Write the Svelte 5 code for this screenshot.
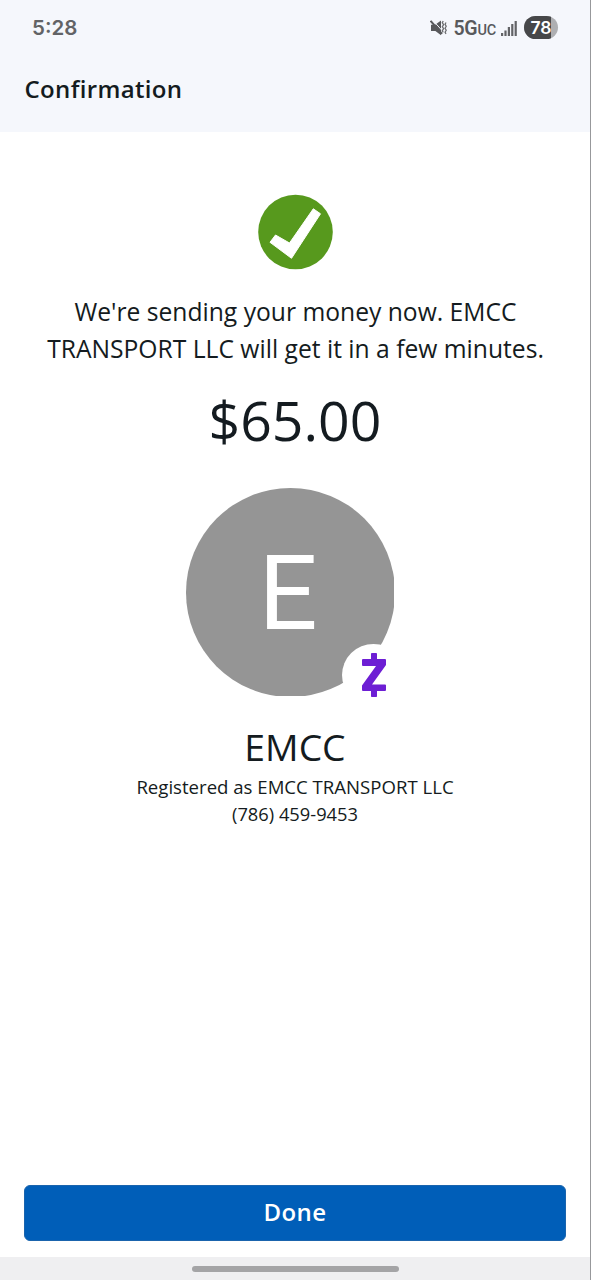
<script lang="ts">
	type Payment = {
		name: string;
		registeredName: string;
		phone: string;
		amount: number;
	};

	const payment: Payment = {
		name: 'EMCC',
		registeredName: 'EMCC TRANSPORT LLC',
		phone: '(786) 459-9453',
		amount: 65
	};

	const time = '5:28';
	const battery = 78;

	$: initial = payment.name.charAt(0);
	$: amountText = '$' + payment.amount.toFixed(2);
</script>

<div class="screen">
	<header>
		<div class="status-bar">
			<span class="time">{time}</span>
			<div class="status-icons">
				<!-- muted / vibrate -->
				<svg class="mute" width="17" height="16" viewBox="0 0 17 16">
					<path d="M1 4.800h4.200L11 .6v14.600L5.400 11H1z" fill="#58595c" />
					<path d="M2.200 -.4l10 11" stroke="#f5f7fc" stroke-width="1" />
					<path d="M.6 .8l11.400 13" stroke="#58595c" stroke-width="2" />
					<path
						d="M13.200 1l-.9 1.700 1.300 2-1.300 2 1.300 2-1.300 2 .9 1.700M16 2.500l-.9 1.700 1.100 2-1.100 2 1.100 2-1.100 2 .9 1.700"
						fill="none"
						stroke="#6b6c6f"
						stroke-width="1.3"
					/>
				</svg>
				<span class="network">5G<small>UC</small></span>
				<svg class="signal" width="16" height="16" viewBox="0 0 16 16" fill="#626366">
					<rect x="0" y="13" width="2.200" height="3" />
					<rect x="3.400" y="10.500" width="2.200" height="5.500" />
					<rect x="6.800" y="7" width="2.200" height="9" />
					<rect x="10.200" y="4" width="2.200" height="12" />
					<rect x="13.600" y="1" width="2.200" height="15" />
				</svg>
				<div class="battery">
					<div class="battery-fill" style="width: {battery}%"></div>
					<span>{battery}</span>
				</div>
			</div>
		</div>
		<h1>Confirmation</h1>
	</header>

	<main>
		<svg class="check" width="75" height="76" viewBox="0 0 75 76">
			<circle cx="37.500" cy="38" r="37.300" fill="#57991d" />
			<path
				d="M12 48.300L17.500 41L31.500 49L55.300 14.800L62.500 19.800L33.500 64.300Z"
				fill="#fff"
				stroke="#fff"
				stroke-linejoin="round"
			/>
		</svg>

		<p class="message">
			We're sending your money now. {payment.registeredName} will get it in a few minutes.
		</p>
		<p class="amount">{amountText}</p>

		<div class="avatar-wrap">
			<div class="avatar"><div class="disc">{initial}</div></div>
			<div class="badge">
				<svg width="26" height="44" viewBox="0 0 26 44" fill="#6d1ed4">
					<rect x="10" y="0" width="6" height="9" rx=".8" />
					<rect x="10" y="35" width="6" height="9" rx=".8" />
					<path
						d="M2 6h22q1 0 1 1v5L11 31.500h13q1 0 1 1V37q0 1-1 1H2q-1 0-1-1v-4.500L15 13H2q-1 0-1-1V7q0-1 1-1z"
					/>
				</svg>
			</div>
		</div>

		<h2>{payment.name}</h2>
		<p class="details">Registered as {payment.registeredName}</p>
		<p class="details phone">{payment.phone}</p>
	</main>

	<footer>
		<button type="button">Done</button>
	</footer>

	<div class="nav-bar"><div class="handle"></div></div>
</div>

<style>
	:global(body) {
		margin: 0;
		background: #fff;
	}

	.screen {
		box-sizing: border-box;
		display: flex;
		flex-direction: column;
		width: 591px;
		height: 1280px;
		border-right: 1px solid #97989b;
		background: #fff;
		color: #141b20;
		font-family: 'Open Sans', 'Noto Sans', sans-serif;
	}

	header {
		box-sizing: border-box;
		height: 132px;
		background: #f5f7fc;
	}

	.status-bar {
		display: flex;
		align-items: center;
		justify-content: space-between;
		height: 55px;
		padding: 0 32px;
		color: #58595c;
		font-family: Inter, Roboto, sans-serif;
	}

	.time {
		margin-top: -1px;
		color: #626366;
		font-size: 20.5px;
		font-weight: 600;
	}

	.status-icons {
		display: flex;
		align-items: center;
	}

	.mute {
		margin-right: 6px;
	}

	.network {
		margin-top: 4px;
		margin-right: 5px;
		font-family: Roboto, sans-serif;
		font-size: 19.5px;
		font-weight: 600;
		letter-spacing: -0.2px;
		line-height: 24px;
	}

	.network small {
		font-size: 14.5px;
		font-weight: 500;
	}

	.signal {
		margin-right: 7px;
	}

	.battery {
		position: relative;
		display: flex;
		align-items: center;
		justify-content: center;
		width: 34px;
		height: 23px;
		border-radius: 12px;
		overflow: hidden;
		background: #aeafb2;
	}

	.battery-fill {
		position: absolute;
		inset: 0 auto 0 0;
		background: #464749;
	}

	.battery span {
		position: relative;
		color: #fff;
		font-size: 17.5px;
		font-weight: 600;
	}

	h1 {
		margin: 0;
		padding: 17px 24.5px 0;
		font-size: 24px;
		font-weight: 600;
		letter-spacing: 0.35px;
		line-height: 34px;
	}

	main {
		display: flex;
		flex: 1;
		flex-direction: column;
		align-items: center;
		padding-top: 62px;
		text-align: center;
	}

	p,
	h2 {
		margin: 0;
		font-weight: 400;
	}

	.message {
		width: 520px;
		margin-top: 23px;
		padding-left: 1px;
		font-size: 24.65px;
		line-height: 37px;
	}

	.amount {
		margin-top: 15px;
		font-size: 55.4px;
		line-height: 76px;
	}

	.avatar-wrap {
		position: relative;
		width: 218px;
		height: 208px;
		margin-top: 30px;
	}

	.avatar {
		width: 208px;
		height: 208px;
		overflow: hidden;
	}

	.disc {
		width: 209px;
		height: 209px;
		border-radius: 50%;
		background: #959595;
		color: #fff;
		font-family: Roboto, sans-serif;
		font-size: 104px;
		line-height: 212px;
		text-indent: -5px;
	}

	/* the badge hangs over the avatar's lower right edge */
	.badge {
		position: absolute;
		left: 156px;
		top: 156px;
		display: flex;
		align-items: center;
		justify-content: center;
		width: 63px;
		height: 62px;
		border-radius: 50%;
		background: #fff;
	}

	h2 {
		margin-top: 25px;
		font-size: 37.3px;
		line-height: 52px;
	}

	.details {
		font-size: 18.6px;
		line-height: 27px;
	}

	.phone {
		font-size: 18.3px;
	}

	footer {
		padding: 0 24px 16px;
	}

	button {
		display: block;
		width: 100%;
		height: 56px;
		padding: 0 0 2px;
		border: 1px solid #1a64ad;
		border-radius: 6px;
		background: #005eb8;
		color: #fff;
		font: 600 24px/52px 'Open Sans', sans-serif;
		letter-spacing: 0.4px;
	}

	.nav-bar {
		display: flex;
		align-items: center;
		justify-content: center;
		height: 23px;
		background: #efeff1;
	}

	.handle {
		width: 207px;
		height: 6px;
		border-radius: 3px;
		background: #a4a4a6;
	}
</style>
